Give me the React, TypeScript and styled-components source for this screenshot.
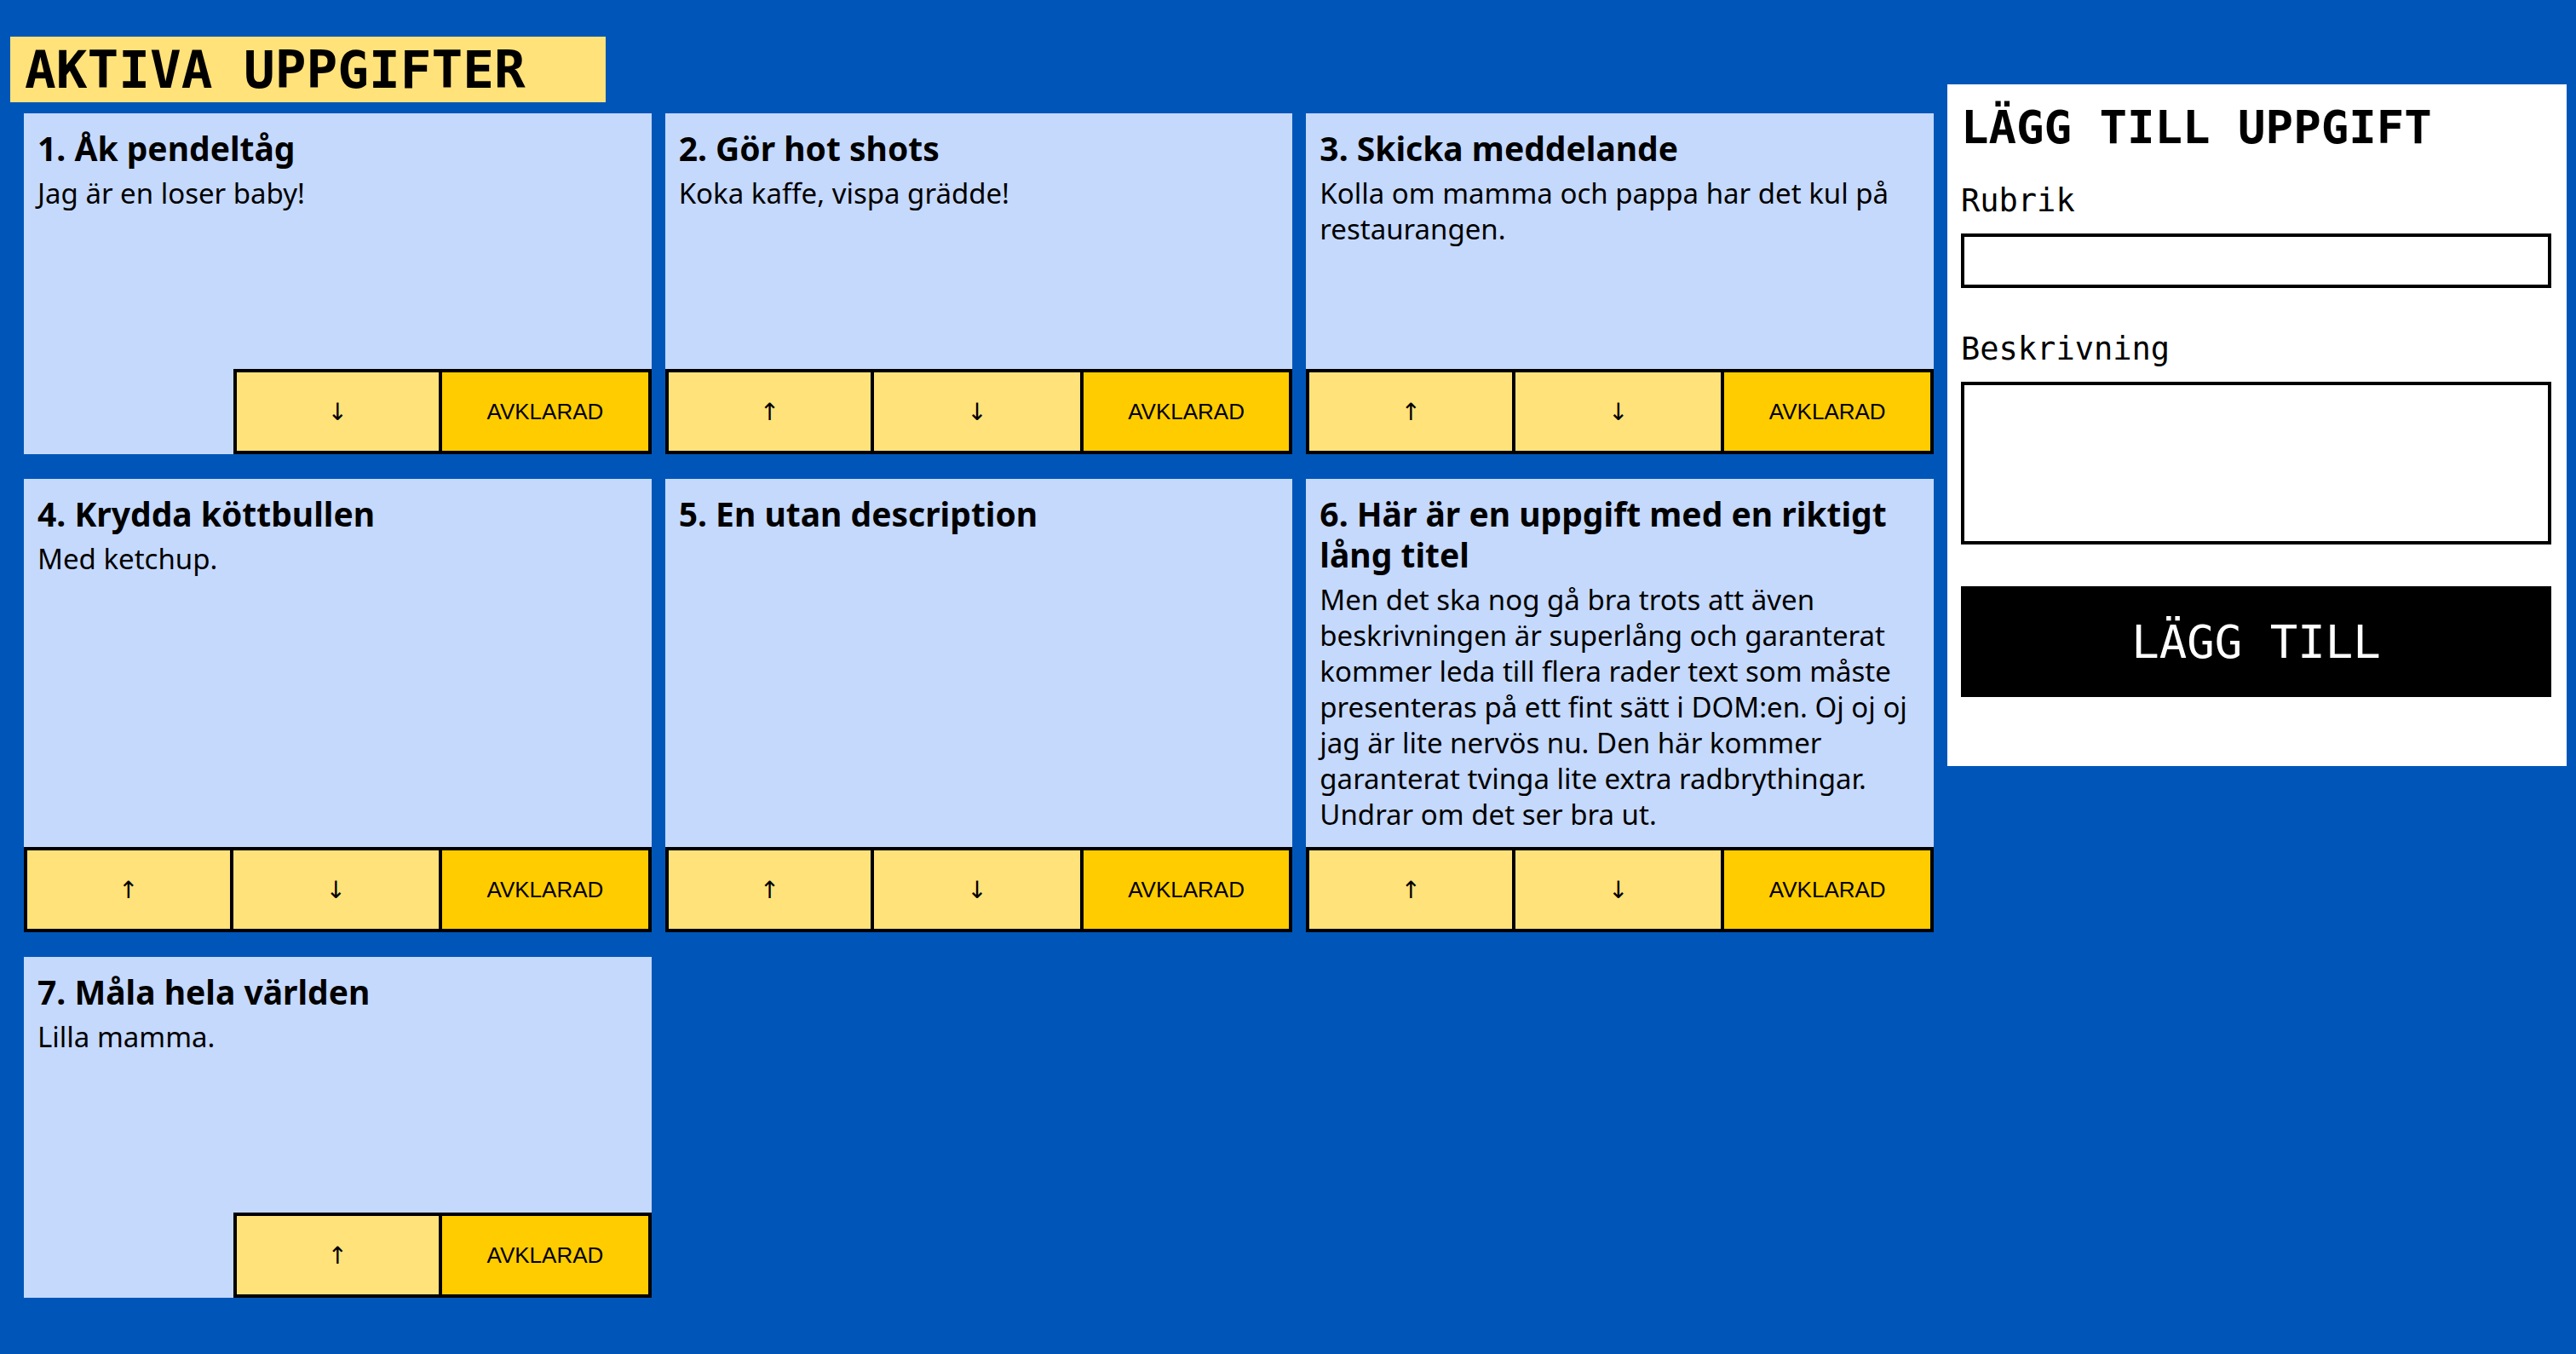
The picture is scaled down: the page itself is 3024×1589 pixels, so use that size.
import React from 'react'
import styled, { createGlobalStyle } from 'styled-components'

const GlobalStyle = createGlobalStyle`
  html, body {
    margin: 0;
    padding: 0;
    background: #0056b8;
  }
  body {
    font-family: 'Noto Sans', 'Open Sans', sans-serif;
    color: #000;
  }
  * {
    box-sizing: border-box;
  }
`

const Page = styled.div`
  display: grid;
  grid-template-columns: 1fr 727px;
  column-gap: 16px;
  align-items: start;
  min-height: 1589px;
  padding: 43px 11px 40px 12px;
`

const Board = styled.section`
  display: flex;
  flex-direction: column;
`

const BoardHeading = styled.h1`
  width: 699px;
  height: 77px;
  margin: 0;
  padding-left: 17px;
  background: #ffe27a;
  font-family: 'DejaVu Sans Mono', 'Liberation Mono', monospace;
  font-weight: 700;
  font-size: 61px;
  line-height: 77px;
`

const CardGrid = styled.div`
  display: grid;
  grid-template-columns: repeat(3, 1fr);
  column-gap: 16px;
  row-gap: 29px;
  margin-top: 13px;
  padding-left: 16px;
`

const Card = styled.article`
  display: flex;
  flex-direction: column;
  min-height: 400px;
  background: #c5d9fd;
`

const CardBody = styled.div`
  flex: 1;
  padding: 17px 16px 17px;
`

const CardTitle = styled.h2`
  margin: 0;
  font-size: 39px;
  font-weight: 700;
  line-height: 48px;
`

const CardText = styled.p`
  margin: 8px 0 0;
  font-size: 33px;
  line-height: 42px;
`

const Actions = styled.div`
  display: flex;
  justify-content: flex-end;
`

const ActionButton = styled.button<{ $done?: boolean }>`
  width: calc(100% / 3);
  height: 100px;
  margin: 0;
  padding: 0;
  border: 4px solid #000;
  border-left-width: 0;
  background: ${({ $done }) => ($done ? '#ffcc00' : '#ffe27a')};
  font-family: 'Liberation Sans', Arial, sans-serif;
  font-size: 26px;
  color: #000;
  cursor: pointer;

  &:first-child {
    border-left-width: 4px;
  }
`

const Arrow = styled.span`
  font-family: 'DejaVu Sans', sans-serif;
  font-size: 28px;
`

const Panel = styled.aside`
  margin-top: 56px;
  padding: 16px 18px 81px 16px;
  background: #fff;
  font-family: 'DejaVu Sans Mono', 'Liberation Mono', monospace;
`

const PanelTitle = styled.h2`
  margin: 0;
  font-size: 54px;
  font-weight: 700;
  line-height: 70px;
`

const Label = styled.label<{ $gap: number }>`
  display: block;
  margin-top: ${({ $gap }) => $gap}px;
  font-size: 37px;
  line-height: 46px;
`

const TextInput = styled.input`
  display: block;
  width: 100%;
  height: 64px;
  margin-top: 15px;
  border: 4px solid #000;
  border-radius: 0;
  background: #fff;
  font-family: inherit;
  font-size: 32px;
`

const TextArea = styled.textarea`
  display: block;
  width: 100%;
  height: 191px;
  margin-top: 15px;
  border: 4px solid #000;
  border-radius: 0;
  background: #fff;
  font-family: inherit;
  font-size: 32px;
  resize: none;
`

const SubmitButton = styled.button`
  display: block;
  width: 100%;
  height: 130px;
  margin-top: 49px;
  border: 0;
  background: #000;
  color: #fff;
  font-family: inherit;
  font-size: 54px;
  cursor: pointer;
`

type Task = {
  title: string
  description?: string
}

const tasks: Task[] = [
  { title: 'Åk pendeltåg', description: 'Jag är en loser baby!' },
  { title: 'Gör hot shots', description: 'Koka kaffe, vispa grädde!' },
  { title: 'Skicka meddelande', description: 'Kolla om mamma och pappa har det kul på restaurangen.' },
  { title: 'Krydda köttbullen', description: 'Med ketchup.' },
  { title: 'En utan description' },
  {
    title: 'Här är en uppgift med en riktigt lång titel',
    description:
      'Men det ska nog gå bra trots att även beskrivningen är superlång och garanterat kommer leda till flera rader text som måste presenteras på ett fint sätt i DOM:en. Oj oj oj jag är lite nervös nu. Den här kommer garanterat tvinga lite extra radbrythingar. Undrar om det ser bra ut.',
  },
  { title: 'Måla hela världen', description: 'Lilla mamma.' },
]

export default function App() {
  return (
    <>
      <GlobalStyle />
      <Page>
        <Board>
          <BoardHeading>AKTIVA UPPGIFTER</BoardHeading>
          <CardGrid>
            {tasks.map((task, i) => (
              <Card key={task.title}>
                <CardBody>
                  <CardTitle>{`${i + 1}. ${task.title}`}</CardTitle>
                  {task.description && <CardText>{task.description}</CardText>}
                </CardBody>
                <Actions>
                  {i > 0 && (
                    <ActionButton>
                      <Arrow>↑</Arrow>
                    </ActionButton>
                  )}
                  {i < tasks.length - 1 && (
                    <ActionButton>
                      <Arrow>↓</Arrow>
                    </ActionButton>
                  )}
                  <ActionButton $done>AVKLARAD</ActionButton>
                </Actions>
              </Card>
            ))}
          </CardGrid>
        </Board>
        <Panel>
          <PanelTitle>LÄGG TILL UPPGIFT</PanelTitle>
          <Label $gap={28} htmlFor="rubrik">
            Rubrik
          </Label>
          <TextInput id="rubrik" type="text" />
          <Label $gap={49} htmlFor="beskrivning">
            Beskrivning
          </Label>
          <TextArea id="beskrivning" />
          <SubmitButton>LÄGG TILL</SubmitButton>
        </Panel>
      </Page>
    </>
  )
}
